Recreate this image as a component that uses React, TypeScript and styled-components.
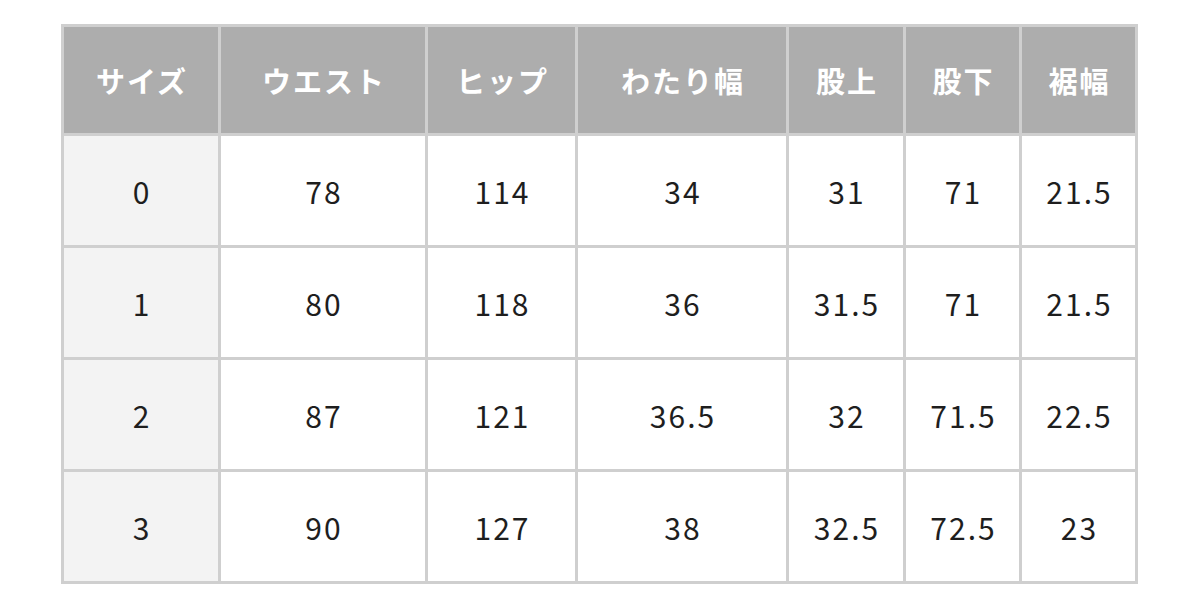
import React from 'react';
import styled, { createGlobalStyle } from 'styled-components';

const GlobalStyle = createGlobalStyle`
  html, body {
    margin: 0;
    padding: 0;
    background: #ffffff;
  }
  body {
    font-family: "Noto Sans CJK JP", "Noto Sans", sans-serif;
  }
`;

const Page = styled.div`
  width: 1200px;
  height: 604px;
  box-sizing: border-box;
  padding: 24px 0 0 61px;
`;

// grid with 3px gaps over a grey background draws the cell borders
const SizeGrid = styled.div`
  display: grid;
  grid-template-columns: 154px 204px 147px 208px 114px 113px 113px;
  grid-template-rows: 106px repeat(4, 109px);
  gap: 3px;
  padding: 3px;
  width: 1077px;
  box-sizing: border-box;
  background: #cfcfcf;
`;

const HeadCell = styled.div`
  display: flex;
  align-items: center;
  justify-content: center;
  background: #adadad;
  color: #ffffff;
  font-size: 29px;
  font-weight: 700;
  letter-spacing: 2px;
  padding-left: 2px;
`;

const Cell = styled.div<{ $label?: boolean }>`
  display: flex;
  align-items: center;
  justify-content: center;
  background: ${(p) => (p.$label ? '#f3f3f3' : '#ffffff')};
  color: #1e1e1e;
  font-size: 30px;
  font-weight: 400;
  letter-spacing: 2px;
  padding-left: 2px;
`;

const headers = ['サイズ', 'ウエスト', 'ヒップ', 'わたり幅', '股上', '股下', '裾幅'];

const rows = [
  ['0', '78', '114', '34', '31', '71', '21.5'],
  ['1', '80', '118', '36', '31.5', '71', '21.5'],
  ['2', '87', '121', '36.5', '32', '71.5', '22.5'],
  ['3', '90', '127', '38', '32.5', '72.5', '23'],
];

export default function App() {
  return (
    <>
      <GlobalStyle />
      <Page>
        <SizeGrid>
          {headers.map((h) => (
            <HeadCell key={h}>{h}</HeadCell>
          ))}
          {rows.map((row, r) =>
            row.map((v, c) => (
              <Cell key={`${r}-${c}`} $label={c === 0}>
                {v}
              </Cell>
            ))
          )}
        </SizeGrid>
      </Page>
    </>
  );
}
